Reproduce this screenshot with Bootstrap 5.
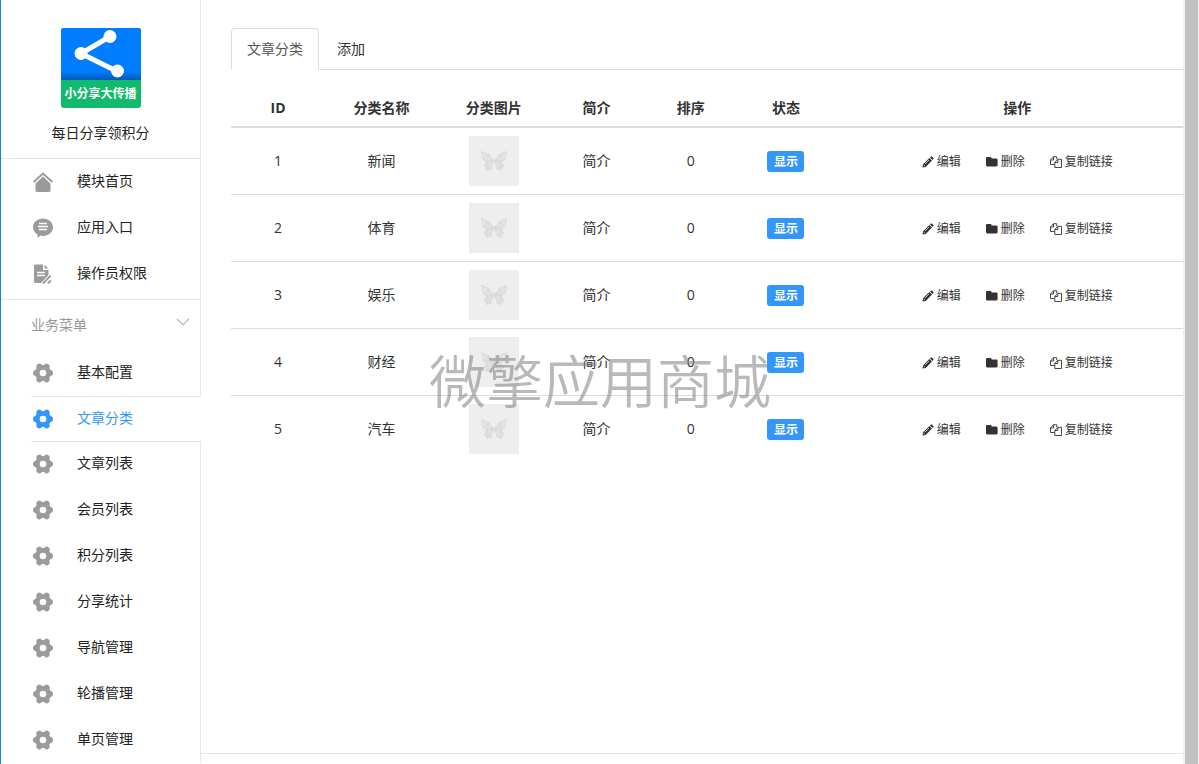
<!DOCTYPE html>
<html lang="zh-CN">
<head>
<meta charset="utf-8">
<meta name="viewport" content="width=device-width, initial-scale=1">
<title>文章分类</title>
<link href="https://cdn.jsdelivr.net/npm/bootstrap@5.3.0/dist/css/bootstrap.min.css" rel="stylesheet">
<style>
  :root { --line: #e7e7eb; --grid: #ddd; --brand: #3296fa; }
  body { font-family: "Open Sans", "Noto Sans CJK SC", sans-serif; font-size: 14px; line-height: 20px; color: #333; background: #fff; overflow: hidden; }
  a { color: inherit; text-decoration: none; }
  .shell { border-left: 1px solid #1a84de; }
  .sidebar { width: 200px; color: #222; }
  .side-part { border-right: 1px solid var(--line); }
  .app-head { padding: 28px 0 14px; border-bottom: 1px solid var(--line); gap: 14px; }
  .app-name { line-height: 22px; }
  .app-logo { width: 80px; height: 80px; border-radius: 3px; overflow: hidden; background: #12ba6b; }
  .app-logo span { color: #fff; font-size: 12px; font-weight: 700; line-height: 28px; white-space: nowrap; }
  .top-menu { padding-bottom: 2px; border-bottom: 1px solid var(--line); }
  .side-link { height: 46px; padding-left: 32px; gap: 24px; border-right: 1px solid var(--line); }
  .side-part .side-link { border-right: 0; }
  .side-link svg { width: 20px; height: 20px; color: #999b9d; }
  .side-link span { padding-bottom: 2px; }
  .side-link.active { color: var(--brand); margin-left: 30px; margin-bottom: -1px; padding-left: 2px; border: solid var(--line); border-width: 1px 0; }
  .side-link.active svg { color: var(--brand); }
  .group-head { height: 50px; padding: 0 10px 0 30px; font-size: 14px; line-height: 20px; color: #999; background: none; }
  .group-head svg { margin-bottom: 6px; }
  .content { min-width: 0; }
  .panel { padding: 28px 0 0 30px; }
  .nav-tabs { --bs-nav-tabs-border-color: var(--grid); --bs-nav-tabs-link-active-color: #555; --bs-nav-tabs-link-active-border-color: var(--grid) var(--grid) #fff; --bs-nav-link-color: #333; --bs-nav-link-padding-x: 15px; --bs-nav-link-padding-y: 10px; --bs-nav-tabs-border-radius: 4px; gap: 2px; margin-bottom: 20px; }
  .cat-table { --bs-table-color: #333; table-layout: fixed; text-align: center; vertical-align: middle; margin: 0; }
  .cat-table > :not(caption) > * > * { padding: 8px; border-color: var(--grid); }
  .cat-table > thead > tr > th { border-bottom-width: 2px; }
  .cat-table > tbody > tr:last-child > td { border-bottom: 0; }
  .cat-table tr > :last-child { padding-left: 26px; }
  .c-sort, .c-state { width: 10%; }
  .c-id { width: 9.9%; }
  .c-intro { width: 9.8%; }
  .c-name, .c-pic { width: 11.8%; }
  .thumb { display: block; width: 50px; height: 50px; margin: 0 auto; background: #eee; }
  .state-tag { display: inline-block; min-width: 37px; padding: 0 6px; font-size: 12px; line-height: 21px; font-weight: 700; color: #fff; background: var(--brand); border-radius: 3px; vertical-align: middle; }
  .row-actions { gap: 25px; padding-top: 2px; font-size: 12px; }
  .row-actions a { display: flex; align-items: center; gap: 3px; white-space: nowrap; }
  .row-actions svg { width: 12px; height: 12px; }
  .page-foot { height: 11px; border-top: 1px solid var(--line); }
  .scroll-rail { width: 16px; background: #f0f0f0; padding: 0 1px 0 2px; }
  .scroll-thumb { background: #c1c1c1; }
  .watermark { position: absolute; inset: 0 0 8px; display: flex; align-items: center; justify-content: center; font: 350 57px/64px "Noto Sans CJK SC", sans-serif; color: rgba(128, 128, 128, .55); white-space: nowrap; pointer-events: none; }
</style>
</head>
<body>
<svg class="d-none" xmlns="http://www.w3.org/2000/svg">
  <symbol id="gear" viewBox="-10 -10 20 20">
    <path fill="none" stroke="currentColor" stroke-width="6" stroke-linecap="round" d="M-7 0H7M-3.600-6.400 3.600 6.400M3.600-6.400-3.600 6.400"/>
    <circle r="8.100" fill="currentColor"/><circle r="3.300" fill="#fff"/>
  </symbol>
  <symbol id="home" viewBox="0 0 20 20">
    <path fill="none" stroke="currentColor" stroke-width="2" d="M.7 10 10 1.500 19.300 10"/>
    <path fill="currentColor" d="M10 4.600 17.500 11.500V18.500a1.500 1.500 0 0 1-1.500 1.500H4a1.500 1.500 0 0 1-1.500-1.500V11.500z"/>
  </symbol>
  <symbol id="chat" viewBox="0 0 20 20">
    <path fill="currentColor" d="M10 .5c5.500 0 10 3.800 10 8.700s-4.500 8.700-10 8.700c-1 0-1.800-.1-2.600-.3L4.500 20V16.500C1.800 15 0 12.300 0 9.200 0 4.300 4.500.5 10 .5z"/>
    <path stroke="#fff" stroke-width="1.300" d="M6 5.500h8M5 8.500h10M6 11.500h8"/>
  </symbol>
  <symbol id="doc" viewBox="0 0 20 20">
    <path fill="currentColor" d="M2.500.5H10V6h5.500v5L8 19H2.500A1.500 1.500 0 0 1 1 17.500V2A1.500 1.500 0 0 1 2.500.5zM11.500.8l3.800 3.800h-3.800z"/>
    <path stroke="#fff" stroke-width="1.300" d="M4 8.500h8M4 11.500h8"/>
    <path stroke="currentColor" stroke-width="1.900" d="M17.700 11.700 10 19.500M17.800 16.500 14.800 19.500"/>
  </symbol>
  <symbol id="pencil" viewBox="0 0 12 12">
    <path fill="currentColor" d="M.5 11.500 1.100 8.300 7.400 2l2.600 2.600L3.700 10.900zM8 1.400 8.900.6c.3-.3.700-.3 1 0l1.500 1.500c.3.300.3.700 0 1L10.600 4z"/>
    <path stroke="#fff" stroke-width=".7" d="M1.700 9l1.300 1.300M3 8l4-4"/>
  </symbol>
  <symbol id="folder" viewBox="0 0 12 12">
    <path fill="currentColor" d="M1.300 1h3c.7 0 1.200.5 1.200 1.200V2.500h4.800c.7 0 1.300.6 1.300 1.300v5.500c0 .7-.6 1.200-1.300 1.200h-9C.6 10.500 0 10 0 9.300V2.200C0 1.500.6 1 1.300 1z"/>
  </symbol>
  <symbol id="copy" viewBox="0 0 12 12">
    <path fill="none" stroke="currentColor" stroke-width=".9" d="M4.500 8.500H.5V4L3.500.7h3.200v2.500M3.500.7V4h-3M4.800 11.500V6.500l3-3.200h3.700v8.200zM7.800 3.300v3.200h-3"/>
  </symbol>
  <symbol id="butterfly" viewBox="0 0 50 50">
    <g fill="#e7e7e7" stroke="#d3d3d3" stroke-width=".6" stroke-linejoin="round">
      <path d="M24 25 20 18.500 12.500 15.500 14 23.500 17.500 26 15.500 30 18 34.500 22 33z"/>
      <path d="M26 25 30 18.500 37.500 15.500 36 23.500 32.500 26 34.500 30 32 34.500 28 33z"/>
      <path fill="none" d="M12.500 15.500 24 25 14 23.500 20 18.500 17.500 26 24 25 15.500 30 22 33 18 26 18 34.500 24 25M37.500 15.500 26 25 36 23.500 30 18.500 32.500 26 26 25 34.500 30 28 33 32 26 32 34.500 26 25M25 23v6M23 22l2 3 2-3"/>
    </g>
  </symbol>
</svg>

<div class="shell d-flex min-vh-100 position-relative">
  <aside class="sidebar flex-shrink-0">
    <div class="side-part">
      <div class="app-head d-flex flex-column align-items-center">
        <div class="app-logo d-flex flex-column align-items-center">
          <svg width="80" height="52" viewBox="0 0 80 52" aria-hidden="true">
            <defs><linearGradient id="sky" x2="0" y2="1"><stop offset=".84" stop-color="#007cff"/><stop offset="1" stop-color="#0458b5"/></linearGradient></defs>
            <path fill="url(#sky)" d="M0 0h80v52H0z"/>
            <path fill="none" stroke="#fffefa" stroke-width="5" d="M49 8.500 20 25.500 56.500 43.500"/>
            <g fill="#fffefa"><circle cx="49" cy="8.500" r="6.500"/><circle cx="20" cy="25.500" r="6.500"/><circle cx="56.500" cy="43" r="6.500"/></g>
          </svg>
          <span>小分享大传播</span>
        </div>
        <div class="app-name">每日分享领积分</div>
      </div>
      <nav class="top-menu">
        <a class="side-link d-flex align-items-center" href="#"><svg><use href="#home"/></svg><span>模块首页</span></a>
        <a class="side-link d-flex align-items-center" href="#"><svg><use href="#chat"/></svg><span>应用入口</span></a>
        <a class="side-link d-flex align-items-center" href="#"><svg><use href="#doc"/></svg><span>操作员权限</span></a>
      </nav>
      <button type="button" class="group-head btn border-0 rounded-0 w-100 d-flex align-items-center justify-content-between">
        <span>业务菜单</span>
        <svg width="14" height="8" viewBox="0 0 14 8" aria-hidden="true"><path fill="none" stroke="#aaa" stroke-width="1.100" d="M1 .8 7 6.800 13 .8"/></svg>
      </button>
    </div>
    <nav>
      <a class="side-link d-flex align-items-center" href="#"><svg><use href="#gear"/></svg><span>基本配置</span></a>
      <a class="side-link active d-flex align-items-center" href="#" aria-current="page"><svg><use href="#gear"/></svg><span>文章分类</span></a>
      <a class="side-link d-flex align-items-center" href="#"><svg><use href="#gear"/></svg><span>文章列表</span></a>
      <a class="side-link d-flex align-items-center" href="#"><svg><use href="#gear"/></svg><span>会员列表</span></a>
      <a class="side-link d-flex align-items-center" href="#"><svg><use href="#gear"/></svg><span>积分列表</span></a>
      <a class="side-link d-flex align-items-center" href="#"><svg><use href="#gear"/></svg><span>分享统计</span></a>
      <a class="side-link d-flex align-items-center" href="#"><svg><use href="#gear"/></svg><span>导航管理</span></a>
      <a class="side-link d-flex align-items-center" href="#"><svg><use href="#gear"/></svg><span>轮播管理</span></a>
      <a class="side-link d-flex align-items-center" href="#"><svg><use href="#gear"/></svg><span>单页管理</span></a>
    </nav>
  </aside>

  <main class="content flex-grow-1 d-flex flex-column">
    <div class="panel flex-grow-1">
      <ul class="nav nav-tabs">
        <li class="nav-item"><a class="nav-link active" href="#">文章分类</a></li>
        <li class="nav-item"><a class="nav-link" href="#">添加</a></li>
      </ul>
      <table class="table cat-table">
        <thead>
          <tr><th class="c-id">ID</th><th class="c-name">分类名称</th><th class="c-pic">分类图片</th><th class="c-intro">简介</th><th class="c-sort">排序</th><th class="c-state">状态</th><th>操作</th></tr>
        </thead>
        <tbody>
          <tr><td>1</td><td>新闻</td><td><svg class="thumb"><use href="#butterfly"/></svg></td><td>简介</td><td>0</td><td><span class="state-tag">显示</span></td>
            <td><div class="row-actions d-flex justify-content-center"><a href="#"><svg><use href="#pencil"/></svg>编辑</a><a href="#"><svg><use href="#folder"/></svg>删除</a><a href="#"><svg><use href="#copy"/></svg>复制链接</a></div></td></tr>
          <tr><td>2</td><td>体育</td><td><svg class="thumb"><use href="#butterfly"/></svg></td><td>简介</td><td>0</td><td><span class="state-tag">显示</span></td>
            <td><div class="row-actions d-flex justify-content-center"><a href="#"><svg><use href="#pencil"/></svg>编辑</a><a href="#"><svg><use href="#folder"/></svg>删除</a><a href="#"><svg><use href="#copy"/></svg>复制链接</a></div></td></tr>
          <tr><td>3</td><td>娱乐</td><td><svg class="thumb"><use href="#butterfly"/></svg></td><td>简介</td><td>0</td><td><span class="state-tag">显示</span></td>
            <td><div class="row-actions d-flex justify-content-center"><a href="#"><svg><use href="#pencil"/></svg>编辑</a><a href="#"><svg><use href="#folder"/></svg>删除</a><a href="#"><svg><use href="#copy"/></svg>复制链接</a></div></td></tr>
          <tr><td>4</td><td>财经</td><td><svg class="thumb"><use href="#butterfly"/></svg></td><td>简介</td><td>0</td><td><span class="state-tag">显示</span></td>
            <td><div class="row-actions d-flex justify-content-center"><a href="#"><svg><use href="#pencil"/></svg>编辑</a><a href="#"><svg><use href="#folder"/></svg>删除</a><a href="#"><svg><use href="#copy"/></svg>复制链接</a></div></td></tr>
          <tr><td>5</td><td>汽车</td><td><svg class="thumb"><use href="#butterfly"/></svg></td><td>简介</td><td>0</td><td><span class="state-tag">显示</span></td>
            <td><div class="row-actions d-flex justify-content-center"><a href="#"><svg><use href="#pencil"/></svg>编辑</a><a href="#"><svg><use href="#folder"/></svg>删除</a><a href="#"><svg><use href="#copy"/></svg>复制链接</a></div></td></tr>
        </tbody>
      </table>
    </div>
    <footer class="page-foot"></footer>
  </main>

  <div class="scroll-rail flex-shrink-0 d-flex"><div class="scroll-thumb flex-grow-1"></div></div>
  <div class="watermark" aria-hidden="true">微擎应用商城</div>
</div>
<script src="https://cdn.jsdelivr.net/npm/bootstrap@5.3.0/dist/js/bootstrap.bundle.min.js"></script>
</body>
</html>
